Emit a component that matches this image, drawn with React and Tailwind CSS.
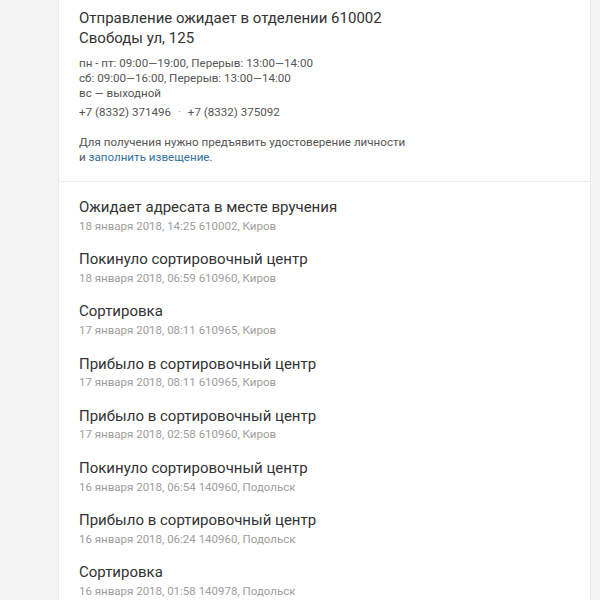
import React from 'react';

function App() {
  const events = [
    { title: 'Ожидает адресата в месте вручения', info: '18 января 2018, 14:25 610002, Киров' },
    { title: 'Покинуло сортировочный центр', info: '18 января 2018, 06:59 610960, Киров' },
    { title: 'Сортировка', info: '17 января 2018, 08:11 610965, Киров' },
    { title: 'Прибыло в сортировочный центр', info: '17 января 2018, 08:11 610965, Киров' },
    { title: 'Прибыло в сортировочный центр', info: '17 января 2018, 02:58 610960, Киров' },
    { title: 'Покинуло сортировочный центр', info: '16 января 2018, 06:54 140960, Подольск' },
    { title: 'Прибыло в сортировочный центр', info: '16 января 2018, 06:24 140960, Подольск' },
    { title: 'Сортировка', info: '16 января 2018, 01:58 140978, Подольск' }
  ];

  return (
    <div className="bg-[#f4f4f4] h-[600px] overflow-hidden font-['Roboto',sans-serif]">
      <div className="ml-[58px] w-[533px] h-full bg-white border-x border-[#e9e9e9]">
        <div className="pl-5 pr-4 pt-2 pb-4 border-b border-[#ececec]">
          <div className="text-[15px] leading-[20px] text-[#333]">
            Отправление ожидает в отделении 610002
            <br />
            Свободы ул, 125
          </div>
          <div className="mt-[8px] text-[11.6px] leading-[15px] text-[#555]">
            <div>пн - пт: 09:00—19:00, Перерыв: 13:00—14:00</div>
            <div>сб: 09:00—16:00, Перерыв: 13:00—14:00</div>
            <div>вс — выходной</div>
          </div>
          <div className="mt-[4px] text-[11.6px] leading-[15px] text-[#555]">
            +7 (8332) 371496 <span className="mx-[4px] text-[#999]">·</span> +7 (8332) 375092
          </div>
          <div className="mt-[15px] text-[11.6px] leading-[15px] text-[#555]">
            Для получения нужно предъявить удостоверение личности
            <br />
            и <span className="text-[#33729f]">заполнить извещение</span>.
          </div>
        </div>
        <div className="pl-5 pt-[15px] flex flex-col gap-[15.5px]">
          {events.map((e, i) => (
            <div key={i}>
              <div className="text-[15px] leading-[20px] text-[#333]">{e.title}</div>
              <div className="pt-[1.7px] text-[11.5px] leading-[15px] text-[#9d9d9d]">{e.info}</div>
            </div>
          ))}
        </div>
      </div>
    </div>
  );
}

export default App;
